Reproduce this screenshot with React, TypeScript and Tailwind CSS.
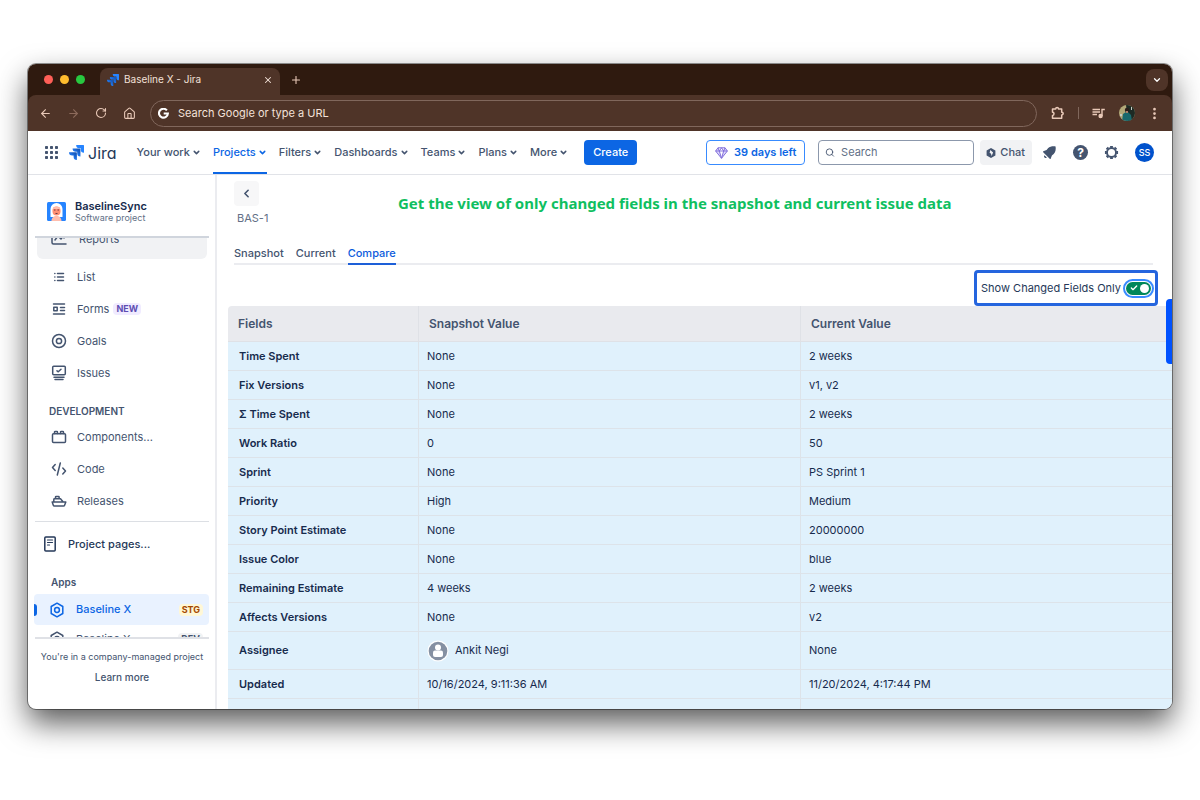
import type { ReactNode } from "react";
import {
  ArrowLeft,
  ArrowRight,
  Check,
  ChevronDown,
  ChevronLeft,
  EllipsisVertical,
  House,
  Plus,
  RotateCw,
  Search,
  X,
} from "lucide-react";

const navItems = ["Your work", "Projects", "Filters", "Dashboards", "Teams", "Plans", "More"];

const rows = [
  { field: "Time Spent", snapshot: "None", current: "2 weeks" },
  { field: "Fix Versions", snapshot: "None", current: "v1, v2" },
  { field: "Σ Time Spent", snapshot: "None", current: "2 weeks" },
  { field: "Work Ratio", snapshot: "0", current: "50" },
  { field: "Sprint", snapshot: "None", current: "PS Sprint 1" },
  { field: "Priority", snapshot: "High", current: "Medium" },
  { field: "Story Point Estimate", snapshot: "None", current: "20000000" },
  { field: "Issue Color", snapshot: "None", current: "blue" },
  { field: "Remaining Estimate", snapshot: "4 weeks", current: "2 weeks" },
  { field: "Affects Versions", snapshot: "None", current: "v2" },
  { field: "Assignee", snapshot: "Ankit Negi", current: "None", user: true },
  { field: "Updated", snapshot: "10/16/2024, 9:11:36 AM", current: "11/20/2024, 4:17:44 PM" },
  { field: "", snapshot: "", current: "" },
];

function JiraMark({ id, size }: { id: string; size: number }) {
  return (
    <svg width={size} height={size} viewBox="0 0 24 24" className="shrink-0">
      <defs>
        <linearGradient id={id} x1="1" y1="0" x2="0" y2="1">
          <stop offset="0.2" stopColor="#1558bc" />
          <stop offset="0.7" stopColor="#2684ff" />
        </linearGradient>
      </defs>
      <path
        fill={`url(#${id})`}
        d="M11.571 11.513H0a5.218 5.218 0 0 0 5.232 5.215h2.13v2.057A5.215 5.215 0 0 0 12.575 24V12.518a1.005 1.005 0 0 0-1.005-1.005z"
      />
      <path
        fill={`url(#${id})`}
        d="M17.294 5.757H5.736a5.215 5.215 0 0 0 5.215 5.214h2.129v2.058a5.218 5.218 0 0 0 5.215 5.214V6.758a1.001 1.001 0 0 0-1.001-1.001z"
      />
      <path
        fill="#2684ff"
        d="M23.013 0H11.455a5.215 5.215 0 0 0 5.215 5.215h2.129v2.057A5.215 5.215 0 0 0 24 12.483V1.005A1.001 1.001 0 0 0 23.013 0z"
      />
    </svg>
  );
}

function GoogleMark() {
  return (
    <svg width="11" height="11" viewBox="0 0 24 24" fill="none" stroke="#fff" strokeWidth="4.600">
      <path d="M19.400 5.200A9.700 9.700 0 1 0 21.600 12H12.400" />
    </svg>
  );
}

function MediaIcon() {
  return (
    <svg width="13" height="13" viewBox="0 0 13 13" fill="none" stroke="currentColor" strokeWidth="1.400">
      <path d="M.5 2.500h7.500M.5 5h7.500M.5 7.500h4.500M10 9V2.500h2.800" />
      <circle cx="8.600" cy="9" r="1.500" fill="currentColor" />
    </svg>
  );
}

function Icon({ children, size = 16 }: { children: ReactNode; size?: number }) {
  return (
    <svg
      width={size}
      height={size}
      viewBox="0 0 16 16"
      fill="none"
      stroke="currentColor"
      strokeWidth="1.500"
      strokeLinecap="round"
      strokeLinejoin="round"
      className="shrink-0"
    >
      {children}
    </svg>
  );
}

const reportsIcon = (
  <Icon>
    <path d="M1 2v9.500a1.500 1.500 0 0 0 1.500 1.500H15M4 9l3-4 3 3 3-4M13 7V4h-3" />
  </Icon>
);
const listIcon = (
  <Icon>
    <path d="M6.500 4.500h6M6.500 8h6M6.500 11.500h6M3.800 4.500h.1M3.800 8h.1M3.800 11.500h.1" />
  </Icon>
);
const formsIcon = (
  <Icon>
    <path d="M2.500 3h11M2.500 13h11M9.500 6.500h4M9.500 9.500h4" />
    <rect x="2.800" y="6.300" width="3.400" height="3.400" />
  </Icon>
);
const goalsIcon = (
  <Icon>
    <circle cx="8" cy="8" r="6.500" />
    <circle cx="8" cy="8" r="2.600" />
  </Icon>
);
const issuesIcon = (
  <Icon>
    <rect x="1.700" y="1.200" width="12.600" height="8.600" rx="1" />
    <path d="M6 5.800l1.300 1L10 4.300M3 12.200h10M4 14.500h8" />
  </Icon>
);
const componentsIcon = (
  <Icon>
    <rect x="1.500" y="4.800" width="13" height="8.700" rx="1" />
    <path d="M3.500 4.500V3.200c0-.5.3-.7.7-.7h1.600c.4 0 .7.200.7.700v1.300M9.500 4.500V3.200c0-.5.3-.7.7-.7h1.600c.4 0 .7.200.7.700v1.300" />
  </Icon>
);
const codeIcon = (
  <Icon>
    <path d="M4.200 3.500L1.500 6.500l2.700 3M9.300 2L6.300 14M11.800 7l2.700 3-2.700 3" />
  </Icon>
);
const releasesIcon = (
  <Icon>
    <path d="M1.200 9h13.600l-1.200 3.200a1.200 1.200 0 0 1-1.100.8H3.400a1.200 1.200 0 0 1-1.100-.8zM2.800 8.800V6.500c0-.4.3-.7.7-.7h6l2.500 3M4.500 5.600V4c0-.4.3-.6.600-.6h2.400c.3 0 .6.200.6.600v1.600" />
  </Icon>
);
const pagesIcon = (
  <Icon>
    <rect x="2.800" y="1" width="10.400" height="14" rx="1" />
    <path d="M5.500 4h5M5.500 6.500h5M5.500 9h2" strokeWidth="1.200" />
  </Icon>
);
const appIcon = (
  <Icon>
    <path d="M8 1.200l5.800 3.300v7L8 14.800l-5.800-3.300v-7z" />
    <circle cx="8" cy="8" r="2.400" />
  </Icon>
);

function SideItem({ icon, label, badge }: { icon: ReactNode; label: string; badge?: string }) {
  return (
    <a href="#" className="flex h-8 items-center pl-[23px]">
      {icon}
      <span className="ml-[10px]">{label}</span>
      {badge && (
        <span className="ml-1 rounded-sm bg-[#f0ebff] px-[3px] text-[9px] leading-3 font-bold text-[#5e4db2]">{badge}</span>
      )}
    </a>
  );
}

function BrowserChrome() {
  return (
    <header className="shrink-0 bg-[#2f1a0f] text-[#e9c9b8]">
      <div className="flex h-[31px] items-end">
        <div className="flex h-full w-[72px] items-center gap-[7px] pl-4">
          <span className="size-[9px] rounded-full bg-[#ff5f57]" />
          <span className="size-[9px] rounded-full bg-[#febc2e]" />
          <span className="size-[9px] rounded-full bg-[#28c840]" />
        </div>
        <div className="flex h-[27px] w-[180px] items-center rounded-t-lg bg-[#4f3428] px-[7px] pb-1 text-[#f3e1d8]">
          <JiraMark id="tab-mark" size={12} />
          <span className="ml-[5px] grow text-[10px]">Baseline X - Jira</span>
          <button aria-label="Close tab">
            <X size={10} strokeWidth={2.5} />
          </button>
        </div>
        <button aria-label="New tab" className="ml-2.5 flex h-full items-center">
          <Plus size={12} strokeWidth={2.2} />
        </button>
        <button
          aria-label="Search tabs"
          className="mr-1 mb-1 ml-auto flex size-[22px] items-center justify-center rounded-lg bg-[#4f3428] text-white"
        >
          <ChevronDown size={10} strokeWidth={3} />
        </button>
      </div>
      <div className="flex h-9 items-center rounded-t-lg bg-[#4f3428] pr-2.5 pl-[11px]">
        <button aria-label="Back">
          <ArrowLeft size={13} />
        </button>
        <button aria-label="Forward" className="ml-[15px] text-[#8c6a5b]">
          <ArrowRight size={13} />
        </button>
        <button aria-label="Reload" className="ml-[15px]">
          <RotateCw size={12} strokeWidth={2.2} />
        </button>
        <button aria-label="Home" className="ml-4">
          <House size={13} />
        </button>
        <div className="ml-3.5 flex h-[27px] grow items-center rounded-full border border-[#80675c] px-[7px]">
          <GoogleMark />
          <input
            aria-label="Address"
            placeholder="Search Google or type a URL"
            className="ml-[9px] grow bg-transparent text-[11px] outline-none placeholder:text-[#f3e1d8]"
          />
        </div>
        <button aria-label="Extensions" className="ml-3.5">
          <svg width="14" height="14" viewBox="0 0 14 14" fill="none" stroke="currentColor" strokeWidth="1.500" strokeLinejoin="round">
            <path d="M1.500 3H4.700c0-2 2.800-2 2.800 0H10.700V6.200c2 0 2 2.800 0 2.800v3.200H1.500V9.400c2 0 2-3.200 0-3.200z" />
          </svg>
        </button>
        <span className="mx-[13px] h-3 w-px bg-[#80675c]" />
        <button aria-label="Media">
          <MediaIcon />
        </button>
        <svg width="16" height="16" viewBox="0 0 16 16" className="ml-3.5">
          <clipPath id="profile">
            <circle cx="8" cy="8" r="8" />
          </clipPath>
          <g clipPath="url(#profile)">
            <path fill="#b2a878" d="M0 0h16v16H0z" />
            <path fill="#1d2a24" d="M7 0h9v16H9z" />
            <path fill="#19696d" d="M3 16l1-7 3-2h2l3 3 1 6z" />
            <circle cx="8" cy="5" r="2.200" fill="#2b1d1a" />
            <path fill="#a97f6a" d="M7 6h2v2H7z" />
            <path fill="#c9ccc4" d="M12 2h1v3h-1zM1 9h2v2H1z" />
          </g>
        </svg>
        <button aria-label="Browser menu" className="ml-3">
          <EllipsisVertical size={15} strokeWidth={2.4} />
        </button>
      </div>
    </header>
  );
}

function TopNav() {
  return (
    <nav className="flex h-11 shrink-0 items-center border-b border-[#e1e3e8] pr-[18px] pl-[17px] font-medium">
      <button aria-label="Switch apps">
        <svg width="13" height="13" viewBox="0 0 13 13" fill="currentColor">
          {[0, 5, 10].map((y) => [0, 5, 10].map((x) => <rect key={`${x}-${y}`} x={x} y={y} width="3" height="3" rx="0.800" />))}
        </svg>
      </button>
      <a href="#" className="ml-[11px] flex items-center gap-1 text-[#253858]">
        <JiraMark id="nav-mark" size={15} />
        <span className="text-[16px] leading-5 font-normal [font-feature-settings:'cv11']">Jira</span>
      </a>
      <div className="ml-5 flex h-full items-center gap-3">
        {navItems.map((item) => (
          <button
            key={item}
            className={`flex h-full items-center gap-0.5 ${item === "Projects" ? "border-y-2 border-t-transparent border-b-[#0c66e4] text-[#0c66e4]" : ""}`}
          >
            {item}
            <ChevronDown size={9} strokeWidth={4} />
          </button>
        ))}
      </div>
      <button className="ml-4 h-[25px] rounded-sm bg-[#0c66e4] px-[9px] text-white">Create</button>
      <div className="ml-auto flex items-center">
        <button className="flex h-[25px] items-center gap-1.5 rounded-sm border border-[#388bff] px-2 font-semibold text-[#0c66e4]">
          <svg width="13" height="12" viewBox="0 0 13 12" fill="#dfd8fd" stroke="#8270db" strokeLinejoin="round">
            <path d="M3 .8h7L12.400 4 6.500 11.300.6 4zM.6 4h11.800M3 .8L4.300 4l2.200 7.300L8.700 4 10 .8M6.500.8L4.300 4M6.500.8L8.700 4" />
          </svg>
          39 days left
        </button>
        <label className="ml-[13px] flex h-[25px] w-[156px] items-center gap-1.5 rounded border border-[#8c98ac] px-1.5">
          <Search size={11} strokeWidth={2.2} />
          <input aria-label="Search" placeholder="Search" className="w-full font-normal outline-none placeholder:text-[#626f86]" />
        </label>
        <button className="ml-1.5 flex h-[25px] items-center gap-1 rounded-sm bg-[#f1f2f4] pr-[7px] pl-1.5">
          <svg width="10" height="10" viewBox="0 0 10 10">
            <path fill="currentColor" d="M5 0l4.400 2.500v5L5 10 .6 7.500v-5z" />
            <path fill="#f1f2f4" d="M4.300 2l2.800 2.600L5.600 8 5 5.500 3.600 5z" />
          </svg>
          Chat
        </button>
        <button aria-label="Notifications" className="ml-2.5">
          <svg width="15" height="15" viewBox="0 0 15 15" fill="currentColor">
            <path d="M13.600 1.400C10.500 1 8 1.500 6 3.300L4.600 5.100 1.300 6.300c-.4.2-.4.700-.1 1l6.500 6.500c.3.300.8.300 1-.1l1.200-3.300 1.800-1.400c1.800-2 2.300-4.500 1.900-7.600z" />
            <path d="M2.500 10.200a1.600 1.600 0 0 0 2.300 2.300z" />
          </svg>
        </button>
        <button aria-label="Help" className="ml-4 flex size-[15px] items-center justify-center rounded-full bg-[#44546f] text-[12px] font-bold text-white">
          ?
        </button>
        <button aria-label="Settings" className="ml-4">
          <svg width="15" height="15" viewBox="0 0 16 16" fill="none" stroke="currentColor">
            <circle cx="8" cy="8" r="4.800" strokeWidth="2" />
            <g strokeWidth="3">
              <path d="M8 1v2M8 13v2M1 8h2M13 8h2M3 3l1.300 1.300M11.700 11.700L13 13M3 13l1.300-1.300M11.700 4.300L13 3" />
            </g>
          </svg>
        </button>
        <button className="ml-4 size-[19px] rounded-full bg-[#0052cc] text-[9px] text-white">SS</button>
      </div>
    </nav>
  );
}

function Sidebar() {
  return (
    <aside className="flex w-[189px] shrink-0 flex-col border-r-2 border-[#ebecf0]">
      <div className="mr-1.5 ml-[7px] flex h-[63px] shrink-0 items-center gap-[9px] border-b-2 border-[#d0d5dd] pt-3 pl-3">
        <svg width="19" height="19" viewBox="0 0 19 19">
          <rect width="19" height="19" rx="1.500" fill="#2684ff" />
          <path fill="#fff" d="M3.500 15V7a6 6 0 0 1 12 0v8z" />
          <rect x="5.500" y="4.500" width="8" height="9" rx="4" fill="#ff8f73" />
          <path fill="#ffbdad" d="M4.500 19c0-3 2-5 5-5s5 2 5 5zM6 5.500l3.500-1 3.500 1v1.500H6z" />
          <path stroke="#6b3a44" strokeWidth="1" d="M7 8h1.500M10.500 8H12M8.500 11.500h2" />
        </svg>
        <div>
          <p className="leading-3 font-semibold text-[#172b4d]">BaselineSync</p>
          <p className="text-[9px] leading-3 text-[#626f86]">Software project</p>
        </div>
      </div>

      <div className="min-h-0 grow overflow-hidden">
        <a href="#" className="mr-2 ml-[9px] -mt-[19px] flex h-10 items-center rounded-md bg-[#f1f2f4] pl-3.5">
          {reportsIcon}
          <span className="ml-3">Reports</span>
        </a>
        <div className="mt-0.5">
          <SideItem icon={listIcon} label="List" />
          <SideItem icon={formsIcon} label="Forms" badge="NEW" />
          <SideItem icon={goalsIcon} label="Goals" />
          <SideItem icon={issuesIcon} label="Issues" />
        </div>
        <h2 className="mt-3 h-5 pl-[21px] text-[10px] leading-5 font-semibold">DEVELOPMENT</h2>
        <SideItem icon={componentsIcon} label="Components..." />
        <SideItem icon={codeIcon} label="Code" />
        <SideItem icon={releasesIcon} label="Releases" />
        <hr className="mr-1.5 ml-[7px] mt-1 border-[#dcdfe4]" />
        <a href="#" className="mt-1.5 flex h-8 items-center pl-3.5 font-medium text-[#253858]">
          {pagesIcon}
          <span className="ml-2.5">Project pages...</span>
        </a>
        <h2 className="mt-3 h-5 pl-[23px] text-[10px] leading-5 font-semibold">Apps</h2>
        <a
          href="#"
          className="relative mx-1.5 mt-0.5 flex h-[31px] items-center rounded-sm bg-[#e9f2ff] pr-1.5 pl-[15px] font-medium text-[#0c66e4]"
        >
          <span className="absolute left-0 h-3 w-[3px] rounded-r-sm bg-[#0c66e4]" />
          {appIcon}
          <span className="ml-[11px] grow">Baseline X</span>
          <span className="rounded-sm bg-[#fff7d6] px-[3px] text-[9px] leading-3 font-bold text-[#a54800]">STG</span>
        </a>
        <a href="#" className="mx-1.5 flex h-7 items-center pr-1.5 pl-[15px]">
          {appIcon}
          <span className="ml-[11px] grow">Baseline X</span>
          <span className="rounded-sm bg-[#f1f2f4] px-[3px] text-[9px] leading-3 font-bold">DEV</span>
        </a>
      </div>

      <footer className="mr-1.5 ml-[7px] h-[72px] shrink-0 border-t-2 border-[#dfe1e6] pt-2.5 text-center whitespace-nowrap">
        <p className="text-[9px] leading-4">You're in a company-managed project</p>
        <a href="#" className="mt-1 block text-[10px] leading-4 font-medium">
          Learn more
        </a>
      </footer>
    </aside>
  );
}

function UserAvatar() {
  return (
    <svg width="22" height="22" viewBox="0 0 22 22" className="-my-1 shrink-0">
      <circle cx="11" cy="11" r="10.500" fill="#fff" />
      <circle cx="11" cy="11" r="9.300" fill="#8590a2" />
      <circle cx="11" cy="7.500" r="3" fill="#fff" />
      <rect x="6" y="10.500" width="10" height="6.500" rx="2" fill="#fff" />
    </svg>
  );
}

function CompareTable() {
  return (
    <table className="w-[calc(100%+11px)] table-fixed border-separate border-spacing-0 text-left text-[#172b4d]">
      <colgroup>
        <col className="w-1/5" />
        <col className="w-2/5" />
        <col className="w-2/5" />
      </colgroup>
      <thead>
        <tr className="h-9 text-[12px] text-[#44546f]">
          <th className="rounded-tl border-r border-b border-[#dfe1e6] bg-[#e9eaee] pl-2.5 font-semibold">Fields</th>
          <th className="border-r border-b border-[#dfe1e6] bg-[#e9eaee] pl-2.5 font-semibold">Snapshot Value</th>
          <th className="border-b border-[#dfe1e6] bg-[#e9eaee] pl-2.5 font-semibold">Current Value</th>
        </tr>
      </thead>
      <tbody>
        {rows.map((row) => (
          <tr key={row.field} className={`bg-[#e0f1fc] ${row.user ? "h-[38px]" : "h-[29px]"}`}>
            <th className="border-r border-b border-[#dde3e9] pl-[11px] font-semibold">{row.field}</th>
            <td className="border-r border-b border-[#dde3e9] pl-2">
              {row.user ? (
                <span className="flex items-center gap-1.5">
                  <UserAvatar />
                  {row.snapshot}
                </span>
              ) : (
                row.snapshot
              )}
            </td>
            <td className="border-b border-[#dde3e9] pl-2">{row.current}</td>
          </tr>
        ))}
      </tbody>
    </table>
  );
}

export default function App() {
  return (
    <div className="min-h-screen bg-white px-7 pt-16 font-['Inter',sans-serif] text-[11px] text-[#44546f]">
      <div className="flex h-[calc(100vh-155px)] flex-col overflow-hidden rounded-lg bg-white shadow-[0_0_0_1px_rgba(0,0,0,0.4),0_14px_30px_rgba(0,0,0,0.65)]">
        <BrowserChrome />
        <TopNav />
        <div className="flex min-h-0 grow">
          <Sidebar />
          <main className="relative min-w-0 grow overflow-hidden pt-1.5 pl-[11px]">
            <div className="flex items-center pl-1.5">
              <div className="w-[164px]">
                <button aria-label="Go back" className="flex size-[25px] items-center justify-center rounded-sm bg-[#f7f7f8]">
                  <ChevronLeft size={13} strokeWidth={3} />
                </button>
                <p className="mt-1 pl-[3px] leading-4 text-[#626f86]">BAS-1</p>
              </div>
              <h1 className="font-['Noto_Sans',sans-serif] text-[15px] font-bold text-[#0fbf61]">
                Get the view of only changed fields in the snapshot and current issue data
              </h1>
            </div>

            <div className="mt-4 mr-[19px] ml-1.5 flex h-[23px] gap-3 border-b-2 border-[#ebecf0] font-medium" role="tablist">
              <button role="tab" className="h-[23px]">Snapshot</button>
              <button role="tab" className="h-[23px]">Current</button>
              <button role="tab" aria-selected="true" className="h-[23px] border-y-2 border-t-transparent border-b-[#1d5fd8] text-[#0c5bdc]">
                Compare
              </button>
            </div>

            <div className="mt-[5px] mr-3.5 flex justify-end">
              <label className="flex h-9 items-center gap-[5px] rounded border-3 border-[#2565de] px-1 text-[#253858]">
                Show Changed Fields Only
                <span className="relative flex items-center">
                  <input
                    type="checkbox"
                    defaultChecked
                    className="h-[13px] w-[25px] appearance-none rounded-full bg-[#00875a] outline-2 outline-offset-1 outline-[#388bff]"
                  />
                  <Check size={8} strokeWidth={4} className="absolute left-1 text-white" />
                  <span className="absolute right-0.5 size-[9px] rounded-full bg-white" />
                </span>
              </label>
            </div>

            <CompareTable />
            <div className="absolute top-[124px] right-0 h-[65px] w-1.5 rounded-l-sm bg-[#0052ff]" />
          </main>
        </div>
      </div>
    </div>
  );
}
